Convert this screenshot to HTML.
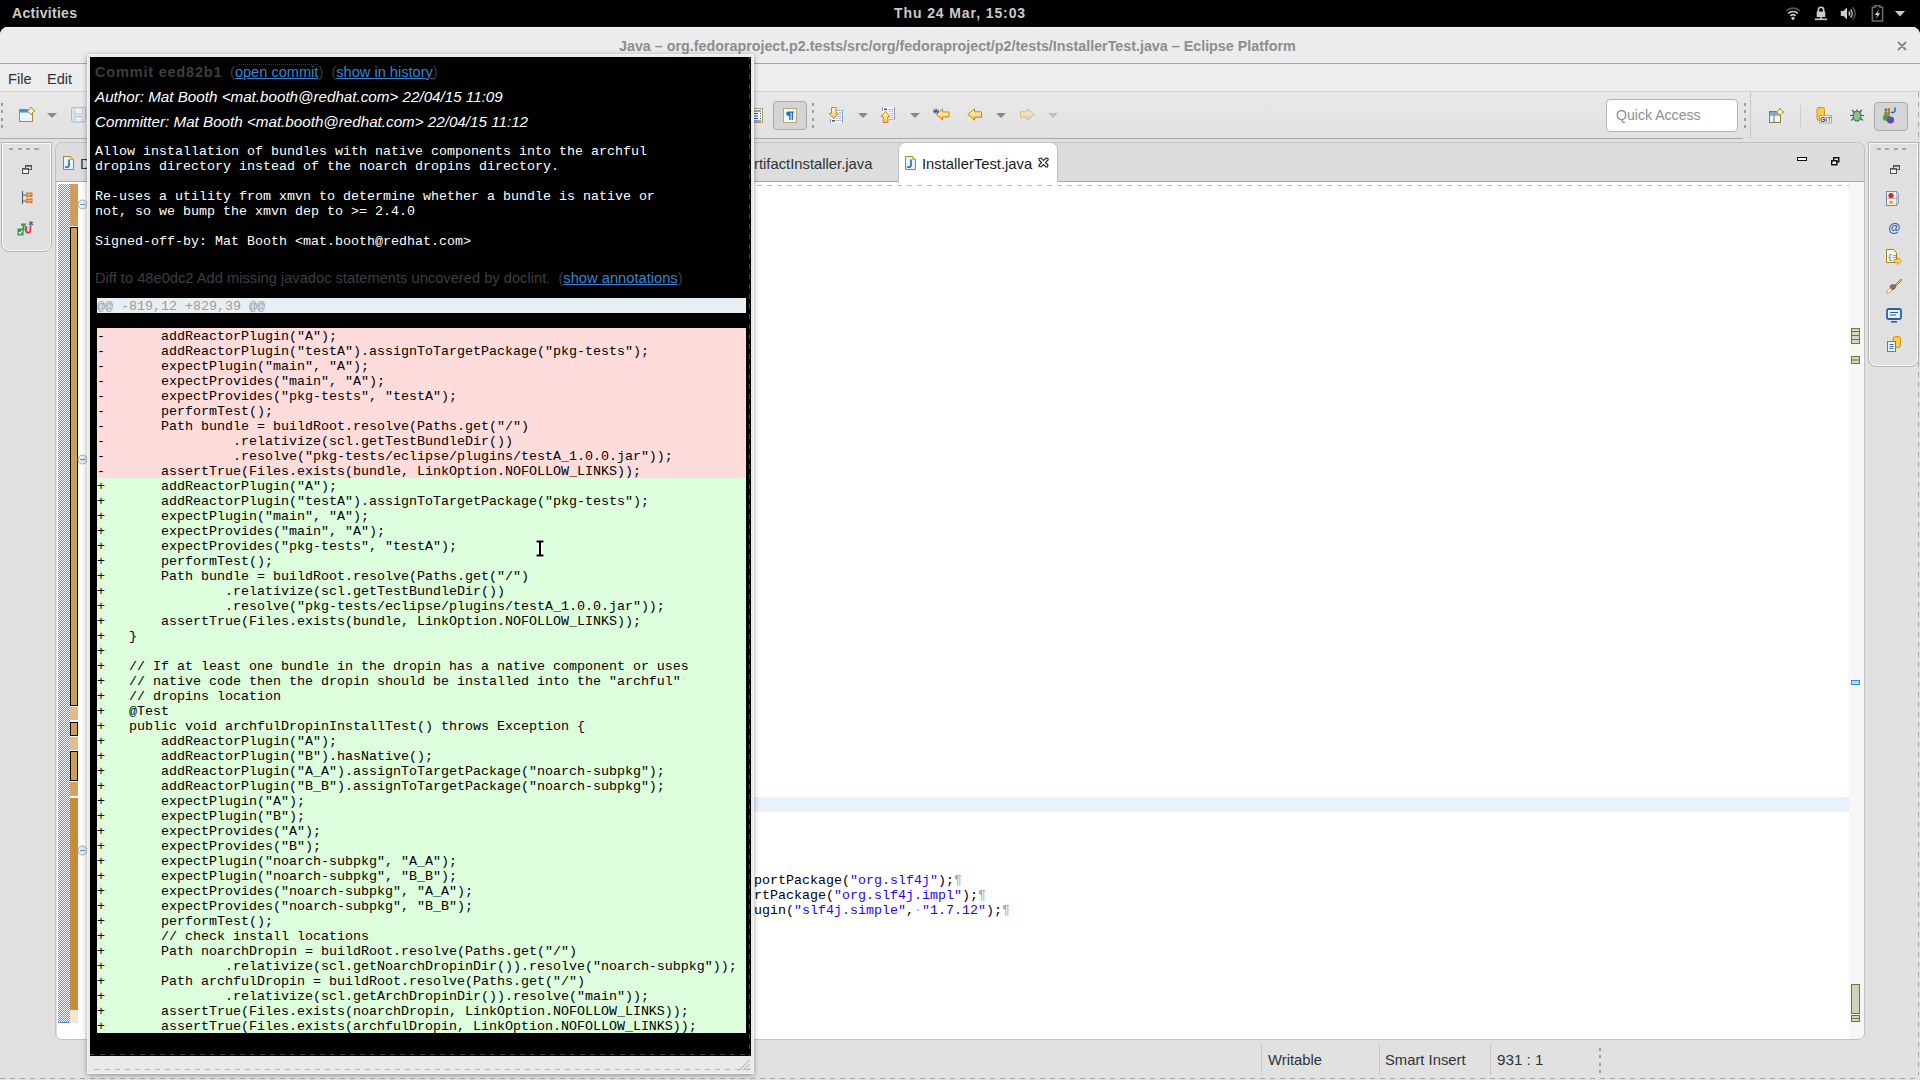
<!DOCTYPE html>
<html><head><meta charset="utf-8">
<style>
*{margin:0;padding:0;box-sizing:border-box}
html,body{width:1920px;height:1080px;overflow:hidden;background:#000;font-family:"Liberation Sans",sans-serif}
.a{position:absolute}
svg{position:absolute;overflow:visible}
.mono{font-family:"Liberation Mono",monospace;font-size:13.33px;line-height:15px;white-space:pre}
.ui{font-size:14.6px;color:#2e3436;white-space:pre}
</style></head><body>
<!-- GNOME top bar -->
<div class="a" style="left:0;top:0;width:1920px;height:27px;background:#000">
  <div class="a" style="left:12px;top:5px;font-size:14px;line-height:16px;font-weight:bold;color:#cbcbcb;letter-spacing:0.3px">Activities</div>
  <div class="a" style="left:894px;top:5px;font-size:14px;line-height:16px;font-weight:bold;color:#cbcbcb;letter-spacing:0.9px">Thu 24 Mar, 15:03</div>
  <!-- wifi -->
  <svg style="left:1785px;top:5px" width="16" height="16" viewBox="0 0 16 16">
    <path d="M1 6 A10 10 0 0 1 15 6" stroke="#555" stroke-width="1.6" fill="none"/>
    <path d="M3.2 8.4 A7 7 0 0 1 12.8 8.4" stroke="#ccc" stroke-width="1.6" fill="none"/>
    <path d="M5.4 10.8 A4 4 0 0 1 10.6 10.8" stroke="#ccc" stroke-width="1.6" fill="none"/>
    <circle cx="8" cy="13.3" r="1.6" fill="#ccc"/>
  </svg>
  <!-- network lock -->
  <svg style="left:1814px;top:6px" width="14" height="15" viewBox="0 0 14 15">
    <path d="M4.3 6 V4 A2.7 2.7 0 0 1 9.7 4 V6" stroke="#ccc" stroke-width="1.6" fill="none"/>
    <rect x="2.7" y="5.5" width="8.6" height="5.5" fill="#ccc"/>
    <rect x="6.2" y="10" width="1.6" height="3" fill="#ccc"/>
    <rect x="0.8" y="12.5" width="12.2" height="1.6" fill="#ccc"/>
  </svg>
  <!-- volume -->
  <svg style="left:1840px;top:6px" width="17" height="15" viewBox="0 0 17 15">
    <path d="M0.8 5 H3.5 L7 1.5 V13.5 L3.5 10 H0.8Z" fill="#ccc"/>
    <path d="M8.8 5.5 A3 3 0 0 1 8.8 9.5" stroke="#ccc" stroke-width="1.4" fill="none"/>
    <path d="M10.6 3.5 A6 6 0 0 1 10.6 11.5" stroke="#ccc" stroke-width="1.4" fill="none"/>
    <path d="M12.6 1.2 A9 9 0 0 1 12.6 13.8" stroke="#555" stroke-width="1.4" fill="none"/>
  </svg>
  <!-- battery -->
  <svg style="left:1871px;top:5px" width="13" height="17" viewBox="0 0 13 17">
    <path d="M4 0.8 H9 V2.2 H11.6 V16 H1.4 V2.2 H4Z" stroke="#6c6c6c" stroke-width="1.6" fill="none"/>
    <path d="M8.2 4.5 L3.6 10 H6.4 L4.6 14 L9.4 8.2 H6.6Z" fill="#d0d0d0"/>
  </svg>
  <svg style="left:1895px;top:11px" width="10" height="6" viewBox="0 0 10 6"><path d="M0 0H10L5 5.5Z" fill="#ccc"/></svg>
</div>

<!-- window -->
<div class="a" style="left:0;top:27px;width:1920px;height:1053px;background:#e1e1e1;border-radius:8px 8px 0 0;overflow:hidden">
  <!-- title bar -->
  <div class="a" style="left:0;top:0;width:1920px;height:37px;background:#ececec;border-bottom:1px solid #a6a6a6;box-shadow:inset 0 1px 0 #fafafa"></div>
  <div class="a" style="left:619px;top:11px;font-size:14.3px;line-height:16px;font-weight:bold;color:#8b8e8f;white-space:pre">Java – org.fedoraproject.p2.tests/src/org/fedoraproject/p2/tests/InstallerTest.java – Eclipse Platform</div>
  <svg style="left:1897px;top:14px" width="10" height="10" viewBox="0 0 10 10"><path d="M1.5 1.5L8.5 8.5M8.5 1.5L1.5 8.5" stroke="#868a8b" stroke-width="1.9" stroke-linecap="round"/></svg>
  <!-- menu bar -->
  <div class="a" style="left:0;top:37px;width:1920px;height:28px;background:#ededed;border-bottom:1px solid #d0d0ce"></div>
  <div class="a ui" style="left:8px;top:44px;line-height:16px">File</div>
  <div class="a ui" style="left:47px;top:44px;line-height:16px">Edit</div>
  <!-- toolbar -->
  <div class="a" style="left:0;top:65px;width:1920px;height:47px;background:linear-gradient(#e9e9e9,#e1e1e1)"></div>
  <div class="a" style="left:0;top:111px;width:1743px;height:1px;background:#a9a9a9"></div>
  <div class="a" style="left:1750px;top:65px;width:1px;height:47px;background:#c9c9c9"></div>

  <!-- toolbar icons (page y - 27) -->
  <div class="a" style="left:1px;top:76px;width:2px;height:26px;background:repeating-linear-gradient(#a39d8c 0 3px,transparent 3px 7.5px)"></div>
  <svg style="left:19px;top:80px" width="16" height="16" viewBox="0 0 16 16">
    <rect x="0.5" y="2.5" width="13" height="12" fill="#eef6fc" stroke="#a88a3c"/>
    <rect x="1" y="3" width="12" height="2.5" fill="#3d8fd6"/>
    <path d="M12 0 L13.6 2.4 L16 4 L13.6 5.6 L12 8 L10.4 5.6 L8 4 L10.4 2.4Z" fill="#fff7d0" stroke="#b08a20" stroke-width="0.9"/>
  </svg>
  <svg style="left:47px;top:86px" width="10" height="5" viewBox="0 0 10 5"><path d="M0 0H10L5 5Z" fill="#868a8b"/></svg>
  <svg style="left:71px;top:80px" width="15" height="16" viewBox="0 0 15 16" opacity="0.55">
    <rect x="0.5" y="0.5" width="14" height="14.5" rx="1.5" fill="#dfe6ef" stroke="#7a98c0"/>
    <rect x="3.5" y="1" width="8" height="6" fill="#f4f6f0" stroke="#9aaac0" stroke-width="0.8"/>
    <rect x="4" y="9.5" width="7" height="5.5" fill="#f0f4f8" stroke="#7a98c0" stroke-width="0.8"/>
  </svg>
  <!-- partial word wrap icon -->
  <svg style="left:752px;top:81px" width="12" height="15" viewBox="0 0 12 15">
    <rect x="0.5" y="0.5" width="10" height="14" fill="#f5f8fc" stroke="#b49c5c"/>
    <path d="M1 3H9M1 5.5H6M1 8H6M1 10.5H6M1 13H9" stroke="#2c55a0" stroke-width="1.2"/>
    <path d="M8 5.5H9M8 8H9M8 10.5H9" stroke="#2c55a0" stroke-width="1.2"/>
  </svg>
  <!-- pressed pilcrow button -->
  <div class="a" style="left:773px;top:74px;width:34px;height:29px;border:1px solid #a9a9a9;border-radius:4px;background:#d5d5d5"></div>
  <svg style="left:783px;top:81px" width="14" height="15" viewBox="0 0 14 15">
    <rect x="0.5" y="0.5" width="13" height="14" fill="#eef8fd" stroke="#b9a776"/>
    <path d="M5 3.5 H11 V4.8 H10 V12 H8.6 V4.8 H7.6 V12 H6.2 V8 A2.4 2.3 0 0 1 5 3.5Z" fill="#2d6db2"/>
  </svg>
  <div class="a" style="left:812px;top:76px;width:2px;height:26px;background:repeating-linear-gradient(#a39d8c 0 3px,transparent 3px 7.5px)"></div>
  <!-- next annotation -->
  <svg style="left:826px;top:78px" width="20" height="20" viewBox="0 0 20 20">
    <defs><linearGradient id="ga" x1="0" y1="0" x2="0" y2="1"><stop offset="0" stop-color="#fffcec"/><stop offset="1" stop-color="#f5c04a"/></linearGradient></defs>
    <rect x="4.5" y="5" width="12" height="13" fill="#f3f7fc"/>
    <path d="M16.5 5V18M4.5 14V18" stroke="#8f9cb6" stroke-width="1"/>
    <path d="M10.5 5.5H15.5M13 7.5H15M13 9.5H15M11.5 11.5H15.5M10 13.5H12M13 13.5H15M10 15.5H15.5" stroke="#aab6d4" stroke-width="1"/>
    <rect x="6" y="15" width="3" height="1.6" fill="#2c5aa0"/>
    <path d="M5.5 2.5H10V8.3H12.2L7.75 13.8L3.3 8.3H5.5Z" fill="url(#ga)" stroke="#c8860a" stroke-width="1"/>
  </svg>
  <svg style="left:858px;top:86px" width="10" height="5" viewBox="0 0 10 5"><path d="M0 0H10L5 5Z" fill="#868a8b"/></svg>
  <!-- prev annotation -->
  <svg style="left:878px;top:78px" width="20" height="20" viewBox="0 0 20 20">
    <rect x="4.5" y="2" width="12" height="13" fill="#f3f7fc"/>
    <path d="M16.5 2V15M4.5 2V6" stroke="#8f9cb6" stroke-width="1"/>
    <path d="M10.5 4.5H15.5M11 6.5H12.5M13.5 6.5H15M12.5 8.5H15.5M13 10.5H15M13 12.5H15M11 14.5H15.5" stroke="#aab6d4" stroke-width="1"/>
    <rect x="6" y="3.5" width="3" height="1.6" fill="#2c5aa0"/>
    <path d="M7.5 6.2L11.8 11.7H9.9V17.5H5.2V11.7H3.2Z" fill="url(#ga)" stroke="#c8860a" stroke-width="1"/>
  </svg>
  <svg style="left:910px;top:86px" width="10" height="5" viewBox="0 0 10 5"><path d="M0 0H10L5 5Z" fill="#868a8b"/></svg>
  <!-- last edit -->
  <svg style="left:933px;top:81px" width="17" height="13" viewBox="0 0 17 13">
    <path d="M16 4 H9.5 V1 L3.5 6.5 L9.5 12 V9 H16Z" fill="url(#ga)" stroke="#c8860a"/>
    <path d="M3 0.5V6M0.5 1.5L5.5 5M5.5 1.5L0.5 5M0 3.3H6" stroke="#2c55a0" stroke-width="1"/>
  </svg>
  <!-- back -->
  <svg style="left:967px;top:81px" width="15" height="13" viewBox="0 0 15 13">
    <path d="M14.5 3.8 H7.5 V0.8 L0.8 6.5 L7.5 12.2 V9.2 H14.5Z" fill="url(#ga)" stroke="#c8860a"/>
  </svg>
  <svg style="left:996px;top:86px" width="10" height="5" viewBox="0 0 10 5"><path d="M0 0H10L5 5Z" fill="#868a8b"/></svg>
  <svg style="left:1020px;top:81px" width="15" height="13" viewBox="0 0 15 13" opacity="0.45">
    <path d="M0.5 3.8 H7.5 V0.8 L14.2 6.5 L7.5 12.2 V9.2 H0.5Z" fill="url(#ga)" stroke="#c8860a"/>
  </svg>
  <svg style="left:1048px;top:86px" width="10" height="5" viewBox="0 0 10 5"><path d="M0 0H10L5 5Z" fill="#bfc1c1"/></svg>
  <!-- quick access -->
  <div class="a" style="left:1606px;top:72px;width:132px;height:33px;background:#fff;border:1px solid #b4b4b4;border-radius:4px"></div>
  <div class="a" style="left:1616px;top:80px;font-size:14.1px;line-height:16px;color:#8c8e8f;white-space:pre">Quick Access</div>
  <div class="a" style="left:1744px;top:76px;width:2px;height:26px;background:repeating-linear-gradient(#a39d8c 0 3px,transparent 3px 7.5px)"></div>
  <!-- perspective icons -->
  <svg style="left:1769px;top:81px" width="16" height="16" viewBox="0 0 16 16">
    <rect x="0.5" y="3.5" width="11" height="11" fill="#eef4fa" stroke="#8a7a50"/>
    <path d="M0.5 7H11.5M5 3.5V14.5" stroke="#8a7a50"/>
    <rect x="1" y="4" width="10" height="2.5" fill="#6ea8dc"/>
    <path d="M11 0 L12.4 2.6 L15 4 L12.4 5.4 L11 8 L9.6 5.4 L7 4 L9.6 2.6Z" fill="#fff7d0" stroke="#b08a20" stroke-width="0.9"/>
  </svg>
  <div class="a" style="left:1800px;top:78px;width:1px;height:22px;background:#cdcdcd"></div>
  <svg style="left:1816px;top:80px" width="16" height="17" viewBox="0 0 16 17">
    <rect x="1" y="0.5" width="7.5" height="13" rx="2" fill="#f6cc4a" stroke="#c9961a"/>
    <rect x="3.5" y="8.5" width="12" height="7.5" fill="#f2f4f6" stroke="#8aa0b8" stroke-width="0.8"/>
    <text x="4.3" y="15" font-size="6.5" font-family="Liberation Sans" font-weight="bold" fill="#333">G</text>
    <text x="9.2" y="15" font-size="6.5" font-family="Liberation Sans" font-weight="bold" fill="#d22">I</text>
    <text x="11.2" y="15" font-size="6.5" font-family="Liberation Sans" font-weight="bold" fill="#2a2">T</text>
  </svg>
  <svg style="left:1849px;top:81px" width="16" height="15" viewBox="0 0 16 15">
    <path d="M3 2L5.5 4.5M13 2L10.5 4.5M1 7.5H4M12 7.5H15M2 12.5L4.5 10.5M14 12.5L11.5 10.5M8 1.5V3.5" stroke="#2f6a6a" stroke-width="1.2"/>
    <ellipse cx="8" cy="8" rx="4" ry="5" fill="#8fc080" stroke="#2f6a6a" stroke-width="1.1"/>
  </svg>
  <div class="a" style="left:1874px;top:75px;width:34px;height:29px;border:1px solid #a9a9a9;border-radius:4px;background:#d5d5d5"></div>
  <svg style="left:1882px;top:80px" width="17" height="17" viewBox="0 0 17 17">
    <path d="M2 3H8M2 6H8M4 1V8M7 1V8" stroke="#9a5a2a" stroke-width="1.2"/>
    <path d="M13 0.5 V4 A2.5 2.5 0 0 1 9 5" stroke="#2a5fb0" stroke-width="1.4" fill="none"/>
    <circle cx="4.5" cy="10.5" r="3.6" fill="#48a048"/>
    <circle cx="8.5" cy="13" r="3.6" fill="#6a4ab0"/>
  </svg>

  <!-- left trim stack -->
  <div class="a" style="left:1px;top:115px;width:51px;height:110px;border:1px solid #b4b4b4;border-radius:0 0 8px 8px;background:#e0e0e0;box-shadow:inset 0 0 0 1px #f8f8f8"></div>
  <div class="a" style="left:9px;top:121px;width:33px;height:2px;background:repeating-linear-gradient(90deg,#aaa69a 0 4px,transparent 4px 8.5px)"></div>
  <svg style="left:22px;top:138px" width="10" height="9" viewBox="0 0 10 9"><rect x="3.5" y="0.5" width="6" height="4" fill="none" stroke="#5a5045"/><rect x="0.5" y="3.5" width="6" height="5" fill="#f2f2f2" stroke="#5a5045"/><path d="M4 1.2H9M1 4.2H6" stroke="#5a5045"/></svg>
  <svg style="left:21px;top:164px" width="12" height="13" viewBox="0 0 12 13"><path d="M1.5 0V13M1.5 4H5M1.5 10H5" stroke="#4a5a7a" stroke-width="1.1"/><rect x="5" y="1.5" width="6.5" height="4.5" fill="#c8782c"/><rect x="5" y="7.5" width="6.5" height="4.5" fill="#c8782c"/><path d="M8.2 1.5V12M5 3.7H11.5M5 9.7H11.5" stroke="#f2d0a0" stroke-width="0.7"/></svg>
  <svg style="left:17px;top:194px" width="17" height="16" viewBox="0 0 17 16"><rect x="0.5" y="7.5" width="6" height="7" fill="#2a9a48"/><path d="M1.8 10.8L3.2 12.6L5.6 9" stroke="#fff" stroke-width="1.2" fill="none"/><path d="M4 3.5H9M6.5 3.5V10" stroke="#2a9a48" stroke-width="1.8"/><path d="M9 5V9.5A2.2 2.2 0 0 0 13.4 9.5V5" stroke="#d03a4a" stroke-width="1.8" fill="none"/><path d="M14 0V5M11.8 1.2L16.2 3.8M16.2 1.2L11.8 3.8" stroke="#2a50a0" stroke-width="1"/></svg>

  <!-- editor tab folder -->
  <div class="a" style="left:55px;top:115px;width:1810px;height:898px;border:1px solid #c2c2c2;border-radius:7px 7px 7px 7px;background:#dddddd;overflow:hidden">
    <div class="a" style="left:0;top:38px;width:1808px;height:1px;background:#a9a9a9"></div>
    <div class="a" style="left:1px;top:39px;width:1792px;height:857px;background:#fff"></div>
    <div class="a" style="left:1793px;top:39px;width:15px;height:857px;background:#f7f7f7"></div>
  </div>

  <!-- tabs (page coords minus 27) -->
  <svg style="left:63px;top:129px" width="11" height="14" viewBox="0 0 11 14"><path d="M0.5 0.5H7.5L10.5 3.5V13.5H0.5Z" fill="#e8f2fc" stroke="#a8842a"/><path d="M7.5 0.5V3.5H10.5" fill="#f0d890" stroke="#a8842a" stroke-width="0.6"/><path d="M6 3.5V9.5A2.2 2.2 0 0 1 2.2 10.5" stroke="#2a66aa" stroke-width="1.6" fill="none"/></svg>
  <div class="a" style="left:80px;top:129px;font-size:14.8px;line-height:16px;color:#2e3436">D</div>
  <div class="a" style="left:754px;top:129px;font-size:14.8px;line-height:16px;color:#2e3436;white-space:pre">rtifactInstaller.java</div>
  <div class="a" style="left:898px;top:115px;width:160px;height:40px;background:#fff;border:1px solid #c0c0c0;border-bottom:none;border-radius:7px 7px 0 0"></div>
  <svg style="left:905px;top:129px" width="11" height="14" viewBox="0 0 11 14"><path d="M0.5 0.5H7.5L10.5 3.5V13.5H0.5Z" fill="#e8f2fc" stroke="#a8842a"/><path d="M7.5 0.5V3.5H10.5" fill="#f0d890" stroke="#a8842a" stroke-width="0.6"/><path d="M6 3.5V9.5A2.2 2.2 0 0 1 2.2 10.5" stroke="#2a66aa" stroke-width="1.6" fill="none"/></svg>
  <div class="a" style="left:922px;top:129px;font-size:14.8px;line-height:16px;color:#1a1c1d;white-space:pre">InstallerTest.java</div>
  <svg style="left:1038px;top:130px" width="11" height="11" viewBox="0 0 11 11"><path d="M1 1.5L3 1 L5.5 3.5 L8 1 L10 1.5 L10 3 L7.5 5.5 L10 8 L9.5 10 L8 10 L5.5 7.5 L3 10 L1 9.5 L1 8 L3.5 5.5 L1 3Z" fill="#fff" stroke="#222" stroke-width="1.1"/></svg>
  <div class="a" style="left:1797px;top:130px;width:10px;height:4px;border:1px solid #111;background:#fff"></div>
  <svg style="left:1831px;top:130px" width="9" height="9" viewBox="0 0 9 9"><rect x="2.75" y="0.75" width="5" height="4" fill="#fff" stroke="#111" stroke-width="1.5"/><rect x="0.75" y="3.75" width="5" height="4" fill="#fff" stroke="#111" stroke-width="1.5"/></svg>
  <!-- dashed focus line in editor -->
  <div class="a" style="left:87px;top:158px;width:1762px;height:1px;background:repeating-linear-gradient(90deg,#bdbdbd 0 5px,transparent 5px 10px)"></div>
  <!-- gutter -->
  <div class="a" style="left:58px;top:157px;width:12px;height:839px;background:conic-gradient(#5b9be8 25%,#f4f8fd 0 50%,#5b9be8 0 75%,#f4f8fd 0) 0 0/2px 2px"></div>
  <div class="a" style="left:58px;top:995px;width:12px;height:1px;background:#4a8fe0"></div>
  <div class="a" style="left:70px;top:157px;width:8px;height:42px;background:#d39b57"></div>
  <div class="a" style="left:70px;top:200px;width:8px;height:479px;background:#d39b57;border:1px solid #000"></div>
  <div class="a" style="left:70px;top:680px;width:8px;height:13px;background:#e4b98c"></div>
  <div class="a" style="left:70px;top:695px;width:8px;height:14px;background:#d39b57;border:1px solid #000"></div>
  <div class="a" style="left:70px;top:710px;width:8px;height:13px;background:#e4b98c"></div>
  <div class="a" style="left:70px;top:724px;width:8px;height:30px;background:#d39b57;border:1px solid #000"></div>
  <div class="a" style="left:70px;top:755px;width:8px;height:14px;background:#d8a062"></div>
  <div class="a" style="left:70px;top:771px;width:8px;height:212px;background:#c98a3e"></div>
  <div class="a" style="left:70px;top:983px;width:8px;height:13px;background:#f4e4d2"></div>
  <svg style="left:77px;top:172px" width="11" height="11" viewBox="0 0 11 11"><circle cx="5.5" cy="5.5" r="4.5" fill="#e6eef6" stroke="#9ab0c8"/><path d="M3 5.5H8" stroke="#7a90a8" stroke-width="1.2"/></svg>
  <svg style="left:77px;top:427px" width="11" height="11" viewBox="0 0 11 11"><circle cx="5.5" cy="5.5" r="4.5" fill="#e6eef6" stroke="#9ab0c8"/><path d="M3 5.5H8" stroke="#7a90a8" stroke-width="1.2"/></svg>
  <svg style="left:77px;top:818px" width="11" height="11" viewBox="0 0 11 11"><circle cx="5.5" cy="5.5" r="4.5" fill="#e6eef6" stroke="#9ab0c8"/><path d="M3 5.5H8" stroke="#7a90a8" stroke-width="1.2"/></svg>
  <!-- current line -->
  <div class="a" style="left:87px;top:770px;width:1762px;height:15px;background:#e8f2fe"></div>
  <!-- editor text -->
  <div class="a mono" style="left:754px;top:846px;color:#000">portPackage(<span style="color:#2a00ff">"org.slf4j"</span>);<span style="color:#a8a8a8">¶</span>
rtPackage(<span style="color:#2a00ff">"org.slf4j.impl"</span>);<span style="color:#a8a8a8">¶</span>
ugin(<span style="color:#2a00ff">"slf4j.simple"</span>,<span style="color:#a8a8a8">·</span><span style="color:#2a00ff">"1.7.12"</span>);<span style="color:#a8a8a8">¶</span></div>
  <!-- overview ruler marks -->
  <svg style="left:1851px;top:301px" width="9" height="16" viewBox="0 0 9 16"><rect x="0.5" y="0.5" width="8" height="15" fill="#d6d6c2" stroke="#76733a"/><path d="M0.5 3.5H8.5M0.5 7.5H8.5M0.5 11.5H8.5" stroke="#76733a"/></svg>
  <svg style="left:1851px;top:329px" width="9" height="8" viewBox="0 0 9 8"><rect x="0.5" y="0.5" width="8" height="7" fill="#d6d6c2" stroke="#76733a"/><path d="M0.5 4H8.5" stroke="#76733a"/></svg>
  <div class="a" style="left:1851px;top:653px;width:9px;height:5px;border:1px solid #2a8af0;background:#c4dcf4"></div>
  <div class="a" style="left:1851px;top:957px;width:9px;height:30px;border:1px solid #76733a;background:#d0d0bc"></div>
  <svg style="left:1851px;top:988px" width="9" height="7" viewBox="0 0 9 7"><rect x="0.5" y="0.5" width="8" height="6" fill="#d6d6c2" stroke="#76733a"/><path d="M0.5 3.5H8.5" stroke="#76733a"/></svg>

  <!-- right trim stack -->
  <div class="a" style="left:1868px;top:115px;width:51px;height:225px;border:1px solid #b4b4b4;border-radius:0 0 8px 8px;background:#e0e0e0;box-shadow:inset 0 0 0 1px #f8f8f8"></div>
  <div class="a" style="left:1877px;top:121px;width:33px;height:2px;background:repeating-linear-gradient(90deg,#aaa69a 0 4px,transparent 4px 8.5px)"></div>
  <svg style="left:1890px;top:138px" width="10" height="9" viewBox="0 0 10 9"><rect x="3.5" y="0.5" width="6" height="4" fill="none" stroke="#5a5045"/><rect x="0.5" y="3.5" width="6" height="5" fill="#f2f2f2" stroke="#5a5045"/><path d="M4 1.2H9M1 4.2H6" stroke="#5a5045"/></svg>
  <svg style="left:1886px;top:164px" width="15" height="15" viewBox="0 0 15 15"><rect x="0.5" y="0.5" width="10" height="14" fill="#f4f0e4" stroke="#7a8aa8"/><path d="M10.5 0.5 Q14 3 12 7 Q14 11 10.5 14.5" fill="#dce8f4" stroke="#7a8aa8"/><circle cx="5" cy="4.5" r="2.6" fill="#e02020"/><path d="M2.5 12.5 Q5 6.5 7.5 12.5Z" fill="#f0a020"/><path d="M0.5 7.5H10.5" stroke="#7a8aa8" stroke-width="0.6"/></svg>
  <div class="a" style="left:1888px;top:194px;font-size:12.5px;line-height:14px;font-weight:bold;font-style:italic;color:#2a66b0">@</div>
  <svg style="left:1886px;top:222px" width="16" height="16" viewBox="0 0 16 16"><path d="M0.5 0.5H7.5L10.5 3.5V13.5H0.5Z" fill="#f8f4e4" stroke="#a8842a"/><text x="1.5" y="10" font-size="8" font-family="Liberation Mono" fill="#2a66b0">{=</text><path d="M8 10.5H12V8.5L15.5 12L12 15.5V13.5H8Z" fill="#fbd56e" stroke="#c98a10" stroke-width="0.8"/></svg>
  <svg style="left:1886px;top:251px" width="16" height="16" viewBox="0 0 16 16"><path d="M9 7 L15 1 L15.5 2.5 L10 8Z" fill="#f0c060" stroke="#a8742a" stroke-width="0.9"/><path d="M4 8 Q7 5 10 8 Q9 12 5 12Z" fill="#7a7a7a" stroke="#555" stroke-width="0.8"/><path d="M0.5 15.5 Q1 11 4.5 10 L6 12.5 Q4 15 0.5 15.5Z" fill="#fff4c0" stroke="#c9a030" stroke-width="0.8"/></svg>
  <svg style="left:1886px;top:281px" width="16" height="15" viewBox="0 0 16 15"><rect x="1" y="1" width="14" height="10" rx="1.5" fill="#eaf2fa" stroke="#2a5fa8" stroke-width="1.8"/><path d="M4 4.5H12M4 7H10" stroke="#2a5fa8" stroke-width="1.2"/><path d="M5 13.8H11" stroke="#2a5fa8" stroke-width="1.6"/></svg>
  <svg style="left:1887px;top:309px" width="15" height="16" viewBox="0 0 15 16"><rect x="6" y="0.5" width="7.5" height="11" rx="2.5" fill="#f6cc4a" stroke="#c9961a"/><rect x="0.5" y="5.5" width="8" height="10" fill="#eef3fa" stroke="#5a7ab0"/><path d="M2.5 8.5H6.5M2.5 10.5H6.5M2.5 12.5H6.5" stroke="#2a5fa8" stroke-width="0.9"/></svg>

  <!-- status bar -->
  <div class="a" style="left:0;top:1013px;width:1920px;height:40px;background:#e1e1e1"></div>
  <div class="a" style="left:1261px;top:1017px;width:1px;height:31px;background:#c6c6c6"></div>
  <div class="a" style="left:1379px;top:1017px;width:1px;height:31px;background:#c6c6c6"></div>
  <div class="a" style="left:1490px;top:1017px;width:1px;height:31px;background:#c6c6c6"></div>
  <div class="a" style="left:1599px;top:1021px;width:2px;height:26px;background:repeating-linear-gradient(#a39d8c 0 3px,transparent 3px 7.5px)"></div>
  <div class="a" style="left:1268px;top:1025px;font-size:14.8px;line-height:16px;color:#2e3436">Writable</div>
  <div class="a" style="left:1385px;top:1025px;font-size:14.8px;line-height:16px;color:#2e3436">Smart Insert</div>
  <div class="a" style="left:1497px;top:1025px;font-size:15.2px;line-height:16px;color:#2e3436">931 : 1</div>
  <div class="a" style="left:1918px;top:65px;width:1px;height:983px;background:repeating-linear-gradient(#a8a8a8 0 5px,transparent 5px 10px)"></div>
  <div class="a" style="left:0;top:1051px;width:1920px;height:1px;background:repeating-linear-gradient(90deg,#a8a8a8 0 5px,transparent 5px 10px)"></div>
</div>

<!-- hover popup -->
<div class="a" style="left:87px;top:54px;width:667px;height:1020px;background:#eaeaea;box-shadow:inset 0 0 0 1px #f3f3f3,0 1px 5px rgba(0,0,0,0.38)">
  <div class="a" style="left:3px;top:3px;width:661px;height:999px;background:#000;overflow:hidden">
    <div class="a" style="left:659px;top:0;width:1px;height:999px;background:repeating-linear-gradient(#404040 0 5px,transparent 5px 10px) 0 7px"></div>
    <div class="a" style="left:0;top:997px;width:660px;height:1px;background:repeating-linear-gradient(90deg,#404040 0 5px,transparent 5px 10px)"></div>
    <div class="a" style="left:5px;top:7px;font-size:14.6px;line-height:16px;font-weight:bold;color:#3b3f40;letter-spacing:0.75px;white-space:pre">Commit eed82b1</div>
    <div class="a" style="left:149px;top:7px;width:79px;height:1px;border-top:1px dotted #383838"></div>
    <div class="a" style="left:140px;top:7px;font-size:14.6px;line-height:16px;color:#3b3f40;white-space:pre">(<span style="color:#3584d6;text-decoration:underline">open commit</span>)  (<span style="color:#3584d6;text-decoration:underline">show in history</span>)</div>
    <div class="a" style="left:5px;top:32px;font-size:15.2px;line-height:16px;font-style:italic;color:#fff;white-space:pre">Author: Mat Booth &lt;mat.booth@redhat.com&gt; 22/04/15 11:09</div>
    <div class="a" style="left:5px;top:57px;font-size:15.2px;line-height:16px;font-style:italic;color:#fff;white-space:pre">Committer: Mat Booth &lt;mat.booth@redhat.com&gt; 22/04/15 11:12</div>
    <div class="a mono" style="left:5px;top:87px;color:#fff">Allow installation of bundles with native components into the archful
dropins directory instead of the noarch dropins directory.

Re-uses a utility from xmvn to determine whether a bundle is native or
not, so we bump the xmvn dep to &gt;= 2.4.0

Signed-off-by: Mat Booth &lt;mat.booth@redhat.com&gt;</div>
    <div class="a" style="left:5px;top:213px;font-size:14.7px;line-height:16px;color:#3b3f40;white-space:pre">Diff to 48e0dc2 Add missing javadoc statements uncovered by doclint.  (<span style="color:#3584d6;text-decoration:underline">show annotations</span>)</div>
    <div class="a mono" style="left:7px;top:241px;width:649px;height:15px;padding-top:1px;background:#e8eff2;color:#9c9c9c">@@ -819,12 +829,39 @@</div>
    <div class="a mono" style="left:7px;top:271px;width:649px;height:150px;padding-top:1px;background:#fedcdc;color:#000">-       addReactorPlugin("A");
-       addReactorPlugin("testA").assignToTargetPackage("pkg-tests");
-       expectPlugin("main", "A");
-       expectProvides("main", "A");
-       expectProvides("pkg-tests", "testA");
-       performTest();
-       Path bundle = buildRoot.resolve(Paths.get("/")
-                .relativize(scl.getTestBundleDir())
-                .resolve("pkg-tests/eclipse/plugins/testA_1.0.0.jar"));
-       assertTrue(Files.exists(bundle, LinkOption.NOFOLLOW_LINKS));</div>
    <div class="a mono" style="left:7px;top:421px;width:649px;height:555px;padding-top:1px;background:#ddfedc;color:#000">+       addReactorPlugin("A");
+       addReactorPlugin("testA").assignToTargetPackage("pkg-tests");
+       expectPlugin("main", "A");
+       expectProvides("main", "A");
+       expectProvides("pkg-tests", "testA");
+       performTest();
+       Path bundle = buildRoot.resolve(Paths.get("/")
+               .relativize(scl.getTestBundleDir())
+               .resolve("pkg-tests/eclipse/plugins/testA_1.0.0.jar"));
+       assertTrue(Files.exists(bundle, LinkOption.NOFOLLOW_LINKS));
+   }
+
+   // If at least one bundle in the dropin has a native component or uses
+   // native code then the dropin should be installed into the "archful"
+   // dropins location
+   @Test
+   public void archfulDropinInstallTest() throws Exception {
+       addReactorPlugin("A");
+       addReactorPlugin("B").hasNative();
+       addReactorPlugin("A_A").assignToTargetPackage("noarch-subpkg");
+       addReactorPlugin("B_B").assignToTargetPackage("noarch-subpkg");
+       expectPlugin("A");
+       expectPlugin("B");
+       expectProvides("A");
+       expectProvides("B");
+       expectPlugin("noarch-subpkg", "A_A");
+       expectPlugin("noarch-subpkg", "B_B");
+       expectProvides("noarch-subpkg", "A_A");
+       expectProvides("noarch-subpkg", "B_B");
+       performTest();
+       // check install locations
+       Path noarchDropin = buildRoot.resolve(Paths.get("/")
+               .relativize(scl.getNoarchDropinDir()).resolve("noarch-subpkg"));
+       Path archfulDropin = buildRoot.resolve(Paths.get("/")
+               .relativize(scl.getArchDropinDir()).resolve("main"));
+       assertTrue(Files.exists(noarchDropin, LinkOption.NOFOLLOW_LINKS));
+       assertTrue(Files.exists(archfulDropin, LinkOption.NOFOLLOW_LINKS));</div>
  </div>
  <div class="a" style="left:3px;top:1015px;width:661px;height:1px;background:repeating-linear-gradient(90deg,#b8b8b8 0 5px,transparent 5px 10px) 5px 0"></div>
  <svg style="left:651px;top:1005px" width="12" height="12" viewBox="0 0 12 12"><path d="M11.5 1L1 11.5M11.5 5L5 11.5M11.5 9L9 11.5" stroke="#a0a0a0" stroke-width="1"/></svg>
</div>
<!-- I-beam cursor -->
<svg style="left:535px;top:539px" width="10" height="19" viewBox="0 0 10 19"><path d="M1.5 1.5H8.5V3.5H6V15.5H8.5V17.5H1.5V15.5H4V3.5H1.5Z" fill="#000" stroke="#fff" stroke-width="2" paint-order="stroke"/></svg>
</body></html>
